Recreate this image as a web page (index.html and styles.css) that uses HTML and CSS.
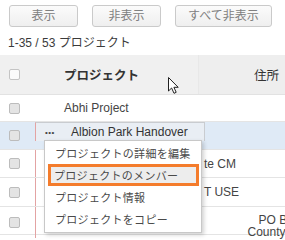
FILE: index.html
```html
<!DOCTYPE html>
<html lang="ja">
<head>
<meta charset="utf-8">
<link rel="stylesheet" href="styles.css">
</head>
<body>
<div class="toolbar">
  <button class="btn">表示</button>
  <button class="btn">非表示</button>
  <button class="btn">すべて非表示</button>
</div>
<div class="count">1-35 / 53 プロジェクト</div>
<div class="grid">
  <div class="row head">
    <div class="c-check"><span class="cb cb-head"></span></div>
    <div class="c-name">プロジェクト</div>
    <div class="c-addr">住所</div>
  </div>
  <div class="row r1">
    <div class="c-check"><span class="cb"></span></div>
    <div class="c-name">Abhi Project</div>
    <div class="c-addr"></div>
  </div>
  <div class="row r2 sel">
    <div class="c-check"><span class="cb"></span></div>
    <div class="c-name">
      <div class="hovercell"><span class="dots">•••</span><span class="hc-text">Albion Park Handover</span></div>
    </div>
    <div class="c-addr"></div>
  </div>
  <div class="row r3 marked">
    <div class="c-check"><span class="cb"></span></div>
    <div class="c-name"></div>
    <div class="c-addr left">te CM</div>
  </div>
  <div class="row r4 marked">
    <div class="c-check"><span class="cb"></span></div>
    <div class="c-name"></div>
    <div class="c-addr left">T USE</div>
  </div>
  <div class="row r5 marked">
    <div class="c-check"><span class="cb"></span></div>
    <div class="c-name"></div>
    <div class="c-addr center"><span>PO Box 81</span><span>County Rd 210</span></div>
  </div>
</div>
<div class="menu">
  <div class="mi">プロジェクトの詳細を編集</div>
  <div class="mi mi-hl">プロジェクトのメンバー</div>
  <div class="mi">プロジェクト情報</div>
  <div class="mi">プロジェクトをコピー</div>
</div>
<svg class="cursor" width="13" height="19" viewBox="0 0 13 19"><path d="M1.5 1.5 L1.5 15 L4.6 12 L7 17.3 L9.2 16.3 L6.9 11.3 L11.2 11.3 Z" fill="#fff" stroke="#222" stroke-width="1" stroke-linejoin="round"/></svg>
</body>
</html>
```
FILE: styles.css
```css
html, body {
  margin: 0;
  padding: 0;
  background: #fff;
  overflow: hidden;
  width: 285px;
  height: 240px;
}
body {
  font-family: "Liberation Sans", "Noto Sans CJK JP", sans-serif;
  font-size: 12px;
  color: #333;
  position: relative;
}
.toolbar {
  display: flex;
  gap: 14px;
  padding: 5px 0 0 9px;
  height: 22px;
}
.btn {
  height: 22px;
  min-width: 69px;
  padding: 0 12px;
  border: 1px solid #cacaca;
  border-radius: 3px;
  background: linear-gradient(#fbfbfb, #efefef);
  color: #808080;
  font-family: "Liberation Sans", "Noto Sans CJK JP", sans-serif;
  font-size: 12px;
  line-height: 20px;
  box-sizing: border-box;
}
.count {
  padding: 9px 0 5px 8px;
  line-height: 14px;
  font-size: 12px;
  color: #3a3a3a;
}
.grid {
  width: 376px;
}
.row {
  display: grid;
  grid-template-columns: 35px 163px 178px;
  border-bottom: 1px solid #e4e4e4;
  box-sizing: border-box;
  position: relative;
}
.row > div {
  display: flex;
  align-items: center;
  overflow: visible;
}
.head {
  height: 40px;
  background: #f0f0f0;
  border-bottom: 1px solid #e2e2e2;
}
.head .c-name {
  padding-left: 29px;
  font-weight: bold;
  font-size: 12.5px;
  color: #333;
}
.head .c-addr {
  padding-left: 55px;
  font-size: 12.5px;
  color: #333;
  background: #eeeeee;
  border-left: 1px solid #e8e8e8;
}
.c-check {
  padding-left: 9px;
}
.cb {
  display: block;
  width: 11px;
  height: 11px;
  box-sizing: border-box;
  border: 1px solid #bcbcbc;
  border-radius: 2px;
  background: #e4e4e4;
}
.cb-head {
  background: #fbfbfb;
  border-color: #c4c4c4;
}
.r1 { height: 27px; }
.r1 .c-name { padding-left: 29px; color: #444; }
.r2 { height: 28px; background: #dfeaf6; }
.r3 { height: 28px; }
.r4 { height: 29px; }
.r5 { height: 28px; }
.marked .c-name {
  border-left: 1px solid #e3a3a3;
}
.c-addr.left {
  padding-left: 6px;
  color: #444;
}
.c-addr.center {
  flex-direction: column;
  justify-content: flex-start;
  align-items: center;
  padding: 7px 0 0 1px;
  color: #444;
  line-height: 12px;
}
.hovercell {
  position: absolute;
  left: 35px;
  top: 0;
  width: 170px;
  height: 19px;
  box-sizing: border-box;
  border-top: 1px solid #c9ccd0;
  border-right: 1px solid #c9ccd0;
  border-left: 1px solid #e3a3a3;
  background: #e9eef4;
  display: flex;
  align-items: center;
  padding-left: 9px;
  z-index: 1;
}
.dots {
  font-size: 8px;
  letter-spacing: 0.5px;
  color: #444;
  width: 26px;
}
.hc-text {
  color: #333;
  font-size: 12px;
}
.menu {
  position: absolute;
  left: 44px;
  top: 140px;
  width: 158px;
  height: 93px;
  box-sizing: border-box;
  border: 1px solid #c8c8c8;
  background: #fff;
  box-shadow: 2px 2px 4px rgba(0, 0, 0, 0.18);
  padding: 1px 0 3px;
  z-index: 2;
}
.mi {
  height: 22px;
  line-height: 22px;
  padding-left: 10px;
  font-family: "Noto Sans CJK JP", sans-serif;
  font-size: 11px;
  letter-spacing: 0.3px;
  color: #4a4a4a;
  white-space: nowrap;
}
.mi-hl {
  margin: 0 2px 0 3px;
  border: 3px solid #f47c2c;
  background: #ededed;
  padding-left: 3px;
  line-height: 16px;
  box-sizing: border-box;
}
.cursor {
  position: absolute;
  left: 167px;
  top: 76px;
  z-index: 3;
}
```
